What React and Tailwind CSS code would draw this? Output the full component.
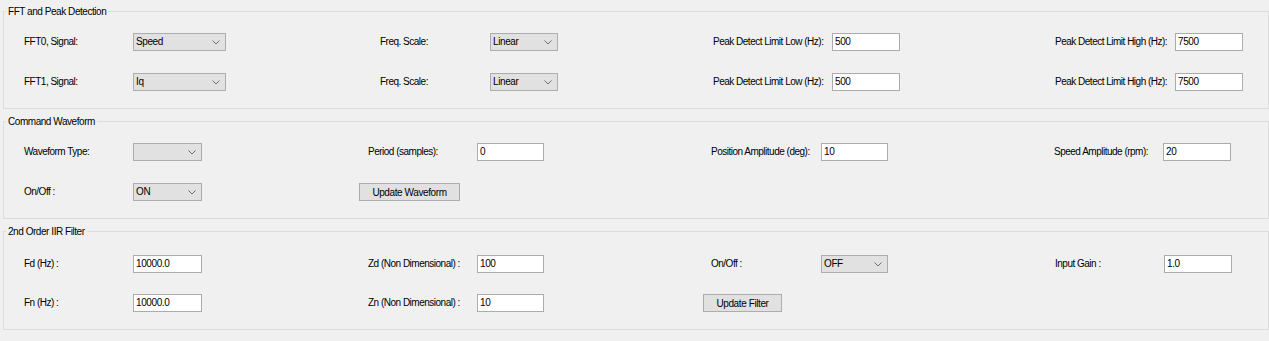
import React from 'react';

const font = { fontFamily: '"Liberation Sans", Arial, sans-serif' };

const Chevron = () => (
  <svg width="8" height="5" viewBox="0 0 8 5" className="shrink-0">
    <polyline points="0.5,0.5 4,4 7.5,0.5" fill="none" stroke="#707070" strokeWidth="1" />
  </svg>
);

const Label = ({ children }) => (
  <span className="text-[10px] leading-[18px] tracking-[-0.5px] text-black whitespace-nowrap">{children}</span>
);

const Combo = ({ value, width }) => (
  <div
    className={`flex h-[18px] items-center justify-between border border-[#adadad] bg-[#e1e1e1] pl-[2px] pr-[5px] text-[10px] tracking-[-0.4px] text-black ${width}`}
  >
    <span className="leading-[16px]">{value}</span>
    <Chevron />
  </div>
);

const Input = ({ value, width }) => (
  <div
    className={`flex h-[18px] items-center border border-[#acacac] bg-white pl-[2px] text-[10px] tracking-[-0.4px] text-black ${width}`}
  >
    <span className="leading-[16px]">{value}</span>
  </div>
);

const Button = ({ children, className }) => (
  <div
    className={`flex h-[18px] items-center justify-center border border-[#adadad] bg-[#e1e1e1] text-[10px] tracking-[-0.4px] text-black ${className}`}
  >
    {children}
  </div>
);

const Group = ({ title, className, children }) => (
  <div className={`relative border border-[#dcdcdc] ${className}`}>
    <span className="absolute -top-[7px] left-[2px] bg-[#f0f0f0] px-[2px] text-[10px] leading-[13px] tracking-[-0.45px] text-black">
      {title}
    </span>
    {children}
  </div>
);

export default function App() {
  return (
    <div className="min-h-[341px] w-[1269px] bg-[#f0f0f0] pl-[3px] pt-[11px]" style={font}>
      <Group title="FFT and Peak Detection" className="pl-[20px] pt-[21px] pb-[17px]">
        <div className="grid grid-cols-[109px_247px_110px_223px_119px_223px_120px_1fr] items-center gap-y-[22px]">
          <Label>FFT0, Signal:</Label>
          <div><Combo value="Speed" width="w-[93px]" /></div>
          <Label>Freq. Scale:</Label>
          <div><Combo value="Linear" width="w-[68px]" /></div>
          <Label>Peak Detect Limit Low (Hz):</Label>
          <div><Input value="500" width="w-[68px]" /></div>
          <Label>Peak Detect Limit High (Hz):</Label>
          <div><Input value="7500" width="w-[68px]" /></div>

          <Label>FFT1, Signal:</Label>
          <div><Combo value="Iq" width="w-[93px]" /></div>
          <Label>Freq. Scale:</Label>
          <div><Combo value="Linear" width="w-[68px]" /></div>
          <Label>Peak Detect Limit Low (Hz):</Label>
          <div><Input value="500" width="w-[68px]" /></div>
          <Label>Peak Detect Limit High (Hz):</Label>
          <div><Input value="7500" width="w-[68px]" /></div>
        </div>
      </Group>

      <Group title="Command Waveform" className="mt-[12px] pl-[20px] pt-[21px] pb-[17px]">
        <div className="grid grid-cols-[109px_235px_109px_234px_110px_233px_109px_1fr] items-center gap-y-[22px]">
          <Label>Waveform Type:</Label>
          <div><Combo value="" width="w-[69px]" /></div>
          <Label>Period (samples):</Label>
          <div><Input value="0" width="w-[67px]" /></div>
          <Label>Position Amplitude (deg):</Label>
          <div><Input value="10" width="w-[67px]" /></div>
          <Label>Speed Amplitude (rpm):</Label>
          <div><Input value="20" width="w-[68px]" /></div>

          <Label>On/Off :</Label>
          <div><Combo value="ON" width="w-[69px]" /></div>
          <div className="col-span-2">
            <Button className="-ml-[9px] w-[101px]">Update Waveform</Button>
          </div>
        </div>
      </Group>

      <Group title="2nd Order IIR Filter" className="mt-[12px] pl-[20px] pt-[23px] pb-[17px]">
        <div className="grid grid-cols-[109px_235px_109px_234px_110px_234px_109px_1fr] items-center gap-y-[21px]">
          <Label>Fd (Hz) :</Label>
          <div><Input value="10000.0" width="w-[69px]" /></div>
          <Label>Zd (Non Dimensional) :</Label>
          <div><Input value="100" width="w-[67px]" /></div>
          <Label>On/Off :</Label>
          <div><Combo value="OFF" width="w-[67px]" /></div>
          <Label>Input Gain :</Label>
          <div><Input value="1.0" width="w-[68px]" /></div>

          <Label>Fn (Hz) :</Label>
          <div><Input value="10000.0" width="w-[69px]" /></div>
          <Label>Zn (Non Dimensional) :</Label>
          <div><Input value="10" width="w-[67px]" /></div>
          <div className="col-span-2">
            <Button className="-ml-[8px] w-[79px]">Update Filter</Button>
          </div>
        </div>
      </Group>
    </div>
  );
}
